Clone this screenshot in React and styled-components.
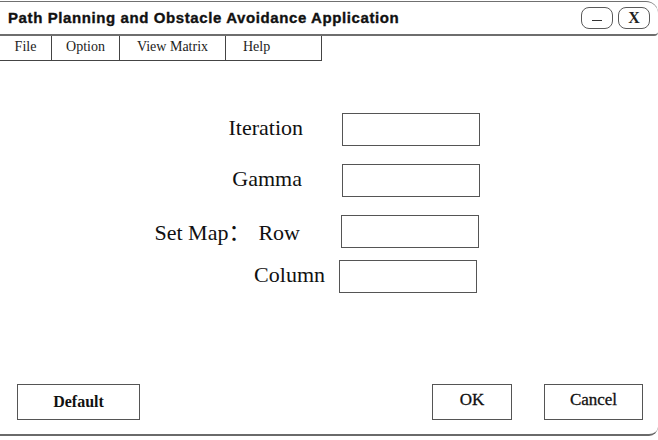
import React from 'react'
import styled, { createGlobalStyle } from 'styled-components'

const GlobalStyle = createGlobalStyle`
  html, body {
    margin: 0;
    padding: 0;
    background: #fff;
  }
  body {
    width: 658px;
    height: 440px;
    overflow: hidden;
  }
`

const Window = styled.div`
  width: 658px;
  height: 436px;
  box-sizing: border-box;
  display: flex;
  flex-direction: column;
  padding-top: 1px;
  background: #fff;
  border-bottom: 2px solid #6a6a6a;
  border-bottom-right-radius: 9px;
`

// title bar ===========================
const TitleBar = styled.div`
  height: 35px;
  box-sizing: border-box;
  display: flex;
  align-items: center;
  justify-content: space-between;
  border-top: 1.5px solid #707070;
  border-bottom: 2px solid #6e6e6e;
  border-top-right-radius: 12px;
  border-bottom-right-radius: 4px;
`
const Title = styled.div`
  padding-left: 8px;
  padding-bottom: 1px;
  font-family: 'Liberation Sans', Arial, sans-serif;
  font-weight: bold;
  font-size: 15px;
  letter-spacing: 0.6px;
  -webkit-text-stroke: 0.35px #111;
  color: #111;
`
const Controls = styled.div`
  display: flex;
  gap: 5px;
  margin-right: 8px;
`
const CtrlButton = styled.div`
  width: 32px;
  height: 22px;
  box-sizing: border-box;
  border: 1.5px solid #5a5a5a;
  border-radius: 8px;
  display: flex;
  justify-content: center;
  align-items: center;
  font-family: 'Liberation Serif', serif;
  font-weight: bold;
  font-size: 16px;
  color: #222;
`
const Dash = styled.span`
  width: 10px;
  height: 1.5px;
  margin-top: 5px;
  background: #333;
`

// menu ===========================
const MenuBar = styled.div`
  display: flex;
  width: fit-content;
  height: 25px;
  box-sizing: border-box;
  border-bottom: 1.5px solid #444;
`
const MenuItem = styled.div`
  width: ${props => props.$w}px;
  box-sizing: border-box;
  border-right: 1px solid #444;
  padding-left: ${props => props.$pad || 0}px;
  text-align: ${props => (props.$pad ? 'left' : 'center')};
  font-family: 'Liberation Serif', serif;
  font-size: 14px;
  line-height: 22px;
  color: #222;
`

// form ===========================
const Form = styled.div`
  flex: 1;
  display: flex;
  flex-direction: column;
  padding-top: 52px;
`
const Field = styled.div`
  display: flex;
  align-items: center;
  height: 33px;
  margin-top: ${props => props.$gap}px;
`
const Label = styled.div`
  width: ${props => props.$end}px;
  padding-bottom: 4px;
  text-align: right;
  font-family: 'Liberation Serif', 'Noto Sans CJK SC', serif;
  font-size: 22px;
  color: #111;
  white-space: nowrap;
`
const Sub = styled.span`
  margin-left: 8px;
`
const Box = styled.div`
  margin-left: ${props => props.$offset}px;
  width: 138px;
  height: 33px;
  box-sizing: border-box;
  border: 1.5px solid #555;
  background: #fff;
`

// footer ===========================
const Footer = styled.div`
  display: flex;
  align-items: flex-end;
  padding: 0 15px 14px 17px;
`
const Spacer = styled.div`
  flex: 1;
`
const Button = styled.div`
  width: ${props => props.$w}px;
  height: 36px;
  margin-left: ${props => props.$ml || 0}px;
  box-sizing: border-box;
  border: 1.5px solid #555;
  display: flex;
  justify-content: center;
  align-items: ${props => (props.$high ? 'flex-start' : 'center')};
  padding-top: ${props => (props.$high ? 5 : 0)}px;
  font-family: 'Liberation Serif', serif;
  font-weight: ${props => (props.$bold ? 'bold' : 'normal')};
  font-size: ${props => (props.$bold ? 16 : 17)}px;
  -webkit-text-stroke: ${props => (props.$bold ? 0 : 0.3)}px #111;
  color: #111;
`

const menu = [
  { label: 'File', w: 52 },
  { label: 'Option', w: 68 },
  { label: 'View Matrix', w: 106 },
  { label: 'Help', w: 96, pad: 17 },
]

const App = () => {
  return (
    <>
      <GlobalStyle />
      <Window>
        <TitleBar>
          <Title>Path Planning and Obstacle Avoidance Application</Title>
          <Controls>
            <CtrlButton><Dash /></CtrlButton>
            <CtrlButton>X</CtrlButton>
          </Controls>
        </TitleBar>

        <MenuBar>
          {menu.map(item => (
            <MenuItem key={item.label} $w={item.w} $pad={item.pad}>{item.label}</MenuItem>
          ))}
        </MenuBar>

        <Form>
          <Field $gap={0}>
            <Label $end={303}>Iteration</Label>
            <Box $offset={39} />
          </Field>
          <Field $gap={18}>
            <Label $end={302}>Gamma</Label>
            <Box $offset={40} />
          </Field>
          <Field $gap={18}>
            <Label $end={300}>Set Map：<Sub>Row</Sub></Label>
            <Box $offset={41} />
          </Field>
          <Field $gap={12}>
            <Label $end={325}>Column</Label>
            <Box $offset={14} />
          </Field>
        </Form>

        <Footer>
          <Button $w={123} $bold>Default</Button>
          <Spacer />
          <Button $w={80} $high>OK</Button>
          <Button $w={99} $ml={32} $high>Cancel</Button>
        </Footer>
      </Window>
    </>
  )
}

export default App
